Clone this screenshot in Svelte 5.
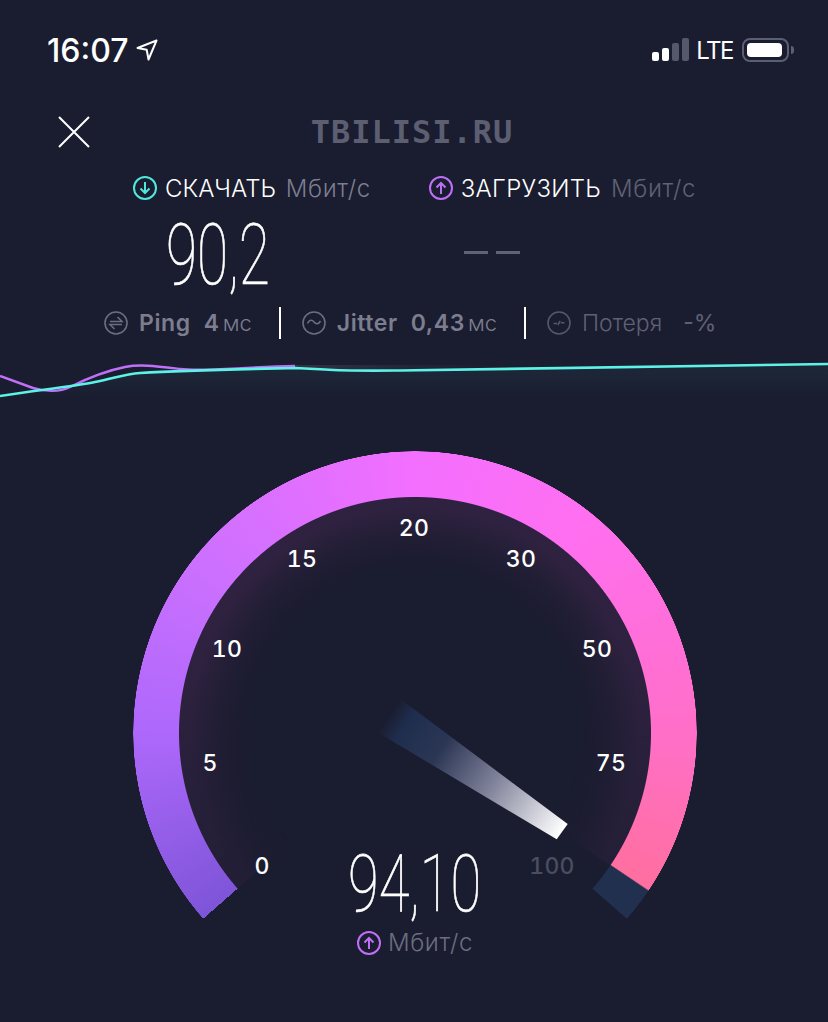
<script>
	// label centres on the page, measured from the dial
	const ticks = [
		{ t: '0', x: 262, y: 866 },
		{ t: '5', x: 210, y: 763 },
		{ t: '10', x: 227, y: 649 },
		{ t: '15', x: 302, y: 559 },
		{ t: '20', x: 414, y: 528 },
		{ t: '30', x: 521, y: 559 },
		{ t: '50', x: 597, y: 649 },
		{ t: '75', x: 611, y: 763 },
		{ t: '100', x: 552, y: 866 }
	];
	const gaugeTop = 410;
</script>

<main>
	<header class="status">
		<div class="time">
			<span>16:07</span>
			<svg width="22" height="22" viewBox="0 0 22 22" fill="none">
				<path d="M20.500 1.500 1.500 9l9.200 1.800L12.500 20.500z" stroke="#fff" stroke-width="2" stroke-linejoin="round" />
			</svg>
		</div>
		<div class="signal">
			<i class="bar b1"></i><i class="bar b2"></i><i class="bar b3 off"></i><i class="bar b4 off"></i>
		</div>
		<span class="lte">LTE</span>
		<div class="battery"><i></i></div>
		<div class="nub"></div>
	</header>

	<div class="top">
		<svg class="close" width="32" height="32" viewBox="0 0 32 32">
			<path d="M1 1 31 31M31 1 1 31" stroke="#fff" stroke-width="2" />
		</svg>
		<span class="watermark">TBILISI.RU</span>
	</div>

	<section class="speeds">
		<div class="col down">
			<div class="label">
				<svg width="24" height="24" viewBox="0 0 24 24" fill="none" stroke="#4fe8dc" stroke-width="2">
					<circle cx="12" cy="12" r="11" />
					<path d="M12 6v11M7.500 12.500 12 17l4.500-4.500" />
				</svg>
				<span class="name">СКАЧАТЬ</span>
				<span class="unit">Мбит/с</span>
			</div>
			<div class="value">90,2</div>
		</div>
		<div class="col up">
			<div class="label">
				<svg width="24" height="24" viewBox="0 0 24 24" fill="none" stroke="#bf6ff5" stroke-width="2">
					<circle cx="12" cy="12" r="11" />
					<path d="M12 18V7M7.500 11.500 12 7l4.500 4.500" />
				</svg>
				<span class="name">ЗАГРУЗИТЬ</span>
				<span class="unit">Мбит/с</span>
			</div>
			<div class="dashes"><i></i><i></i></div>
		</div>
	</section>

	<section class="stats">
		<div class="stat">
			<svg width="24" height="24" viewBox="0 0 24 24" fill="none" stroke="#6b6d80" stroke-width="1.600">
				<circle cx="12" cy="12" r="11" />
				<path d="M6 10.500h12l-4.500-4.500M18 13.500H6l4.500 4.500" />
			</svg>
			<b>Ping</b>
			<b class="num">4</b><span class="ms">мс</span>
		</div>
		<i class="divider"></i>
		<div class="stat">
			<svg width="24" height="24" viewBox="0 0 24 24" fill="none" stroke="#6b6d80" stroke-width="1.600">
				<circle cx="12" cy="12" r="11" />
				<path d="M5.500 12.500c2-4 4.500-4 6.500-1.500s4.500 2.500 6.500-1" />
			</svg>
			<b>Jitter</b>
			<b class="num">0,43</b><span class="ms">мс</span>
		</div>
		<i class="divider"></i>
		<div class="stat dim">
			<svg width="24" height="24" viewBox="0 0 24 24" fill="none" stroke="#55576b" stroke-width="1.600">
				<circle cx="12" cy="12" r="11" />
				<path d="M6.500 12.500h3.500M10.800 14l2.400-4M14 11.800h3.500" />
			</svg>
			<span class="loss">Потеря</span>
			<span class="pct">-%</span>
		</div>
	</section>

	<svg class="graph" width="828" height="60" viewBox="0 0 828 60" fill="none">
		<defs>
			<linearGradient id="fade" x1="0" y1="0" x2="0" y2="1">
				<stop offset="0.2" stop-color="#4fe8dc" stop-opacity="0.05" />
				<stop offset="0.75" stop-color="#4fe8dc" stop-opacity="0" />
			</linearGradient>
			<linearGradient id="band" x1="0" y1="0" x2="1" y2="0">
				<stop offset="0" stop-color="#fff" stop-opacity="0.1" />
				<stop offset="1" stop-color="#fff" stop-opacity="0" />
			</linearGradient>
		</defs>
		<rect x="295" y="15" width="200" height="4" fill="url(#band)" />
		<path
			d="M0 46C40 40 75 36 95 32S125 24 140 23C190 20 250 19 295 18L325 19.500C345 21 360 20.800 400 20.500L828 14V60H0Z"
			fill="url(#fade)"
		/>
		<path
			d="M0 26 33 38C45 42 60 42 70 37S100 22 125 17C140 14 155 16 180 19S240 17 295 16"
			stroke="#c06ff8"
			stroke-width="2.400"
		/>
		<path
			d="M0 46C40 40 75 36 95 32S125 24 140 23C190 20 250 19 295 18L325 19.500C345 21 360 20.800 400 20.500L828 14"
			stroke="#5cf2e6"
			stroke-width="2.600"
		/>
	</svg>

	<section class="gauge">
		<div class="glow"></div>
		<div class="ring"></div>
		{#each ticks as tick}
			<span class="tick" class:last={tick.t === '100'} style="left:{tick.x}px;top:{tick.y - gaugeTop}px">{tick.t}</span>
		{/each}
		<svg class="needle" width="828" height="612" viewBox="0 410 828 612">
			<defs>
				<linearGradient id="nd" gradientUnits="userSpaceOnUse" x1="388" y1="715" x2="562" y2="831">
					<stop offset="0" stop-color="#1f2e4e" stop-opacity="0" />
					<stop offset="0.1" stop-color="#1f2e4e" />
					<stop offset="0.3" stop-color="#2b3654" />
					<stop offset="0.6" stop-color="#80829a" />
					<stop offset="1" stop-color="#ffffff" />
				</linearGradient>
			</defs>
			<polygon points="399,698 377,732 556.700,839.300 567.700,824" fill="url(#nd)" />
		</svg>
		<div class="readout">
			<div class="big">94,10</div>
			<div class="readunit">
				<svg width="24" height="24" viewBox="0 0 24 24" fill="none" stroke="#bf6ff5" stroke-width="2">
					<circle cx="12" cy="12" r="11" />
					<path d="M12 18V7M7.500 11.500 12 7l4.500 4.500" />
				</svg>
				<span>Мбит/с</span>
			</div>
		</div>
	</section>
</main>

<style>
	:global(body) {
		background: #1a1c2f;
	}

	main {
		width: 828px;
		height: 1022px;
		overflow: hidden;
		background: #1a1c2f;
		color: #fff;
		font-family: Inter, 'Noto Sans', sans-serif;
	}

	.status {
		display: flex;
		align-items: center;
		height: 100px;
		padding: 0 34px 0 47px;
		box-sizing: border-box;
	}

	.time {
		display: flex;
		align-items: center;
		gap: 8px;
		margin-right: auto;
		font-size: 32px;
		font-weight: 500;
	}

	.signal {
		display: flex;
		align-items: flex-end;
		gap: 3px;
		height: 23px;
		margin-top: -1px;
	}

	.bar {
		width: 7px;
		background: #fff;
		border-radius: 2px;
	}

	.b1 { height: 9px; }
	.b2 { height: 13px; }
	.b3 { height: 18px; }
	.b4 { height: 23px; }
	.off { background: #55576b; }

	.lte {
		margin-left: 7px;
		font-size: 24px;
		font-weight: 400;
		letter-spacing: -1.500px;
	}

	.battery {
		width: 47px;
		height: 24px;
		margin-left: 9px;
		padding: 3px;
		box-sizing: border-box;
		border: 2px solid #5c5e72;
		border-radius: 8px;
	}

	.battery i {
		display: block;
		width: 35px;
		height: 100%;
		background: #fff;
		border-radius: 4px;
	}

	.nub {
		width: 3px;
		height: 8px;
		margin-left: 2px;
		background: #5c5e72;
		border-radius: 0 4px 4px 0;
	}

	.top {
		position: relative;
		display: flex;
		align-items: center;
		justify-content: center;
		height: 64px;
	}

	.close {
		position: absolute;
		left: 58px;
		top: 16px;
	}

	.watermark {
		margin-left: -4px;
		font-family: 'DejaVu Sans Mono', monospace;
		font-size: 32px;
		font-weight: 700;
		letter-spacing: 1px;
		color: #5c5e72;
	}

	.speeds {
		display: flex;
		gap: 58px;
		padding-left: 133px;
		height: 128px;
	}

	.label {
		display: flex;
		align-items: center;
		height: 48px;
	}

	.name {
		margin-left: 8px;
		font-size: 24px;
		font-weight: 300;
	}

	.up .name {
		letter-spacing: 0.3px;
	}

	.unit {
		margin-left: 10px;
		font-size: 24px;
		font-weight: 300;
		letter-spacing: 0.6px;
		color: #7c7e90;
	}

	.up .unit {
		color: #5f6175;
	}

	.value,
	.big {
		font-family: Roboto, sans-serif;
		font-weight: 100;
		-webkit-text-stroke: 0.7px #fff;
		line-height: 1;
		transform-origin: left center;
	}

	.value {
		width: max-content;
		margin-left: 33px;
		font-size: 86px;
		transform: scaleX(0.66);
	}

	.dashes {
		display: flex;
		gap: 8px;
		height: 80px;
		align-items: center;
		padding-left: 35px;
	}

	.dashes i {
		width: 24px;
		height: 3px;
		background: #5f6175;
	}

	.stats {
		display: flex;
		align-items: center;
		height: 62px;
		padding-left: 104px;
		box-sizing: border-box;
	}

	.stat {
		display: flex;
		align-items: center;
		font-size: 23px;
		color: #7c7e90;
	}

	.stat svg {
		margin-right: 11px;
	}

	.stat b {
		font-weight: 600;
		letter-spacing: 0.6px;
	}

	.num {
		margin-left: 13px;
	}

	.ms {
		margin-left: 3px;
		font-size: 22px;
		font-weight: 300;
	}

	.dim {
		color: #5f6175;
	}

	.loss {
		font-weight: 300;
	}

	.pct {
		margin-left: 21px;
		font-weight: 400;
	}

	.divider {
		width: 2px;
		height: 32px;
		margin: 0 21px 0 27px;
		background: #fff;
	}

	.graph {
		display: block;
		margin-top: -4px;
	}

	.gauge {
		position: relative;
		height: 612px;
	}

	.ring,
	.glow {
		position: absolute;
		left: 133px;
		top: 41px;
		width: 564px;
		height: 564px;
		border-radius: 50%;
	}

	.ring {
		background: conic-gradient(
			from 228.75deg,
			#7e55d8 0deg,
			#ad68fb 41deg,
			#cc70ff 80deg,
			#f36fff 131deg,
			#ff6ff0 170deg,
			#ff6fc8 221deg,
			#ff6fa0 255.100deg,
			#21304f 255.400deg,
			#21304f 262.400deg,
			transparent 262.600deg
		);
		mask: radial-gradient(circle closest-side, transparent 235.500px, #000 236.500px, #000 281.500px, transparent 282px);
	}

	.glow {
		background: conic-gradient(
			from 228.75deg,
			rgba(47, 34, 64, 0.4) 0deg,
			#2f2240 60deg,
			#2f2240 200deg,
			rgba(47, 34, 64, 0.5) 255deg,
			transparent 256deg
		);
		mask: radial-gradient(circle closest-side, transparent 165px, rgba(0, 0, 0, 0.35) 195px, #000 225px, #000 240px);
	}

	.tick {
		position: absolute;
		transform: translate(-50%, -50%);
		font-size: 23px;
		font-weight: 500;
		letter-spacing: 0.3px;
		font-variant-numeric: tabular-nums;
		line-height: 1;
	}

	.tick.last {
		color: #4a4c60;
	}

	.needle {
		position: absolute;
		left: 0;
		top: 0;
	}

	.readout {
		position: absolute;
		left: 348px;
		top: 434px;
	}

	.big {
		width: max-content;
		font-size: 80px;
		transform: scaleX(0.7);
	}

	.readunit {
		display: flex;
		align-items: center;
		gap: 7px;
		margin: 4px 0 0 9px;
		font-size: 24px;
		font-weight: 300;
		letter-spacing: 0.6px;
		color: #6c6e80;
	}
</style>
